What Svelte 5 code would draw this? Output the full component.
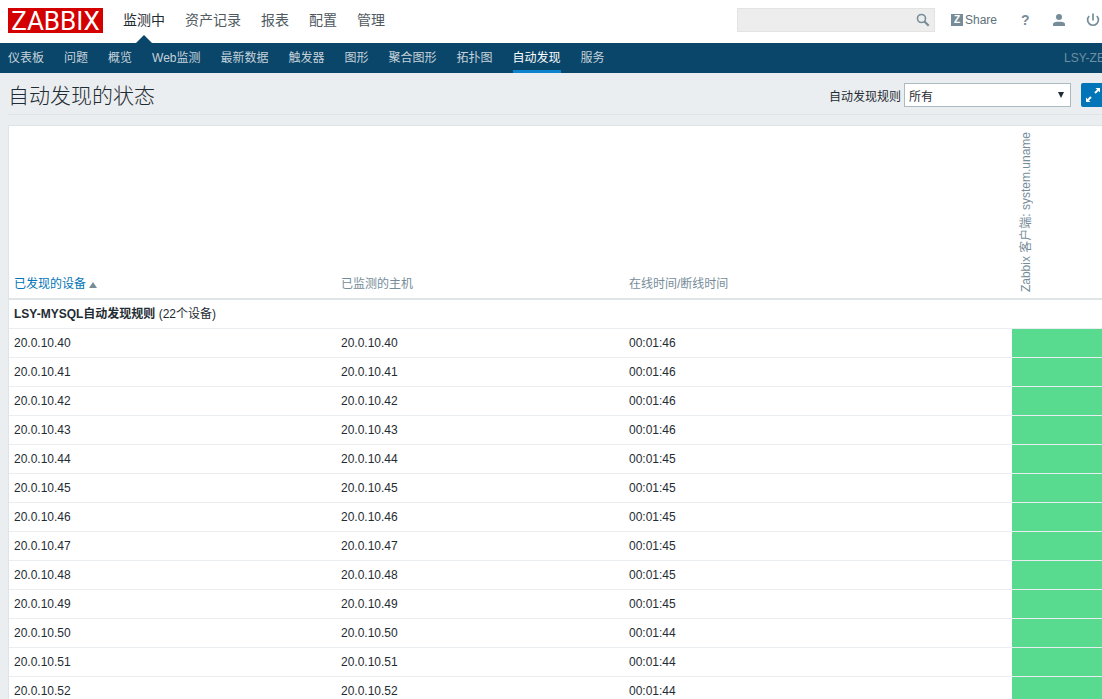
<script lang="ts">
  const mainMenu = ['监测中', '资产记录', '报表', '配置', '管理'];
  const subMenu = ['仪表板', '问题', '概览', 'Web监测', '最新数据', '触发器', '图形', '聚合图形', '拓扑图', '自动发现', '服务'];

  const hosts = [
    { ip: '20.0.10.40', uptime: '00:01:46' },
    { ip: '20.0.10.41', uptime: '00:01:46' },
    { ip: '20.0.10.42', uptime: '00:01:46' },
    { ip: '20.0.10.43', uptime: '00:01:46' },
    { ip: '20.0.10.44', uptime: '00:01:45' },
    { ip: '20.0.10.45', uptime: '00:01:45' },
    { ip: '20.0.10.46', uptime: '00:01:45' },
    { ip: '20.0.10.47', uptime: '00:01:45' },
    { ip: '20.0.10.48', uptime: '00:01:45' },
    { ip: '20.0.10.49', uptime: '00:01:45' },
    { ip: '20.0.10.50', uptime: '00:01:44' },
    { ip: '20.0.10.51', uptime: '00:01:44' },
    { ip: '20.0.10.52', uptime: '00:01:44' },
  ];

  let activeMain = $state('监测中');
  let activeSub = $state('自动发现');
  let search = $state('');
</script>

<div class="page">
  <header class="top">
    <a class="logo" href="#home">ZABBIX</a>
    <nav class="main-nav">
      {#each mainMenu as item}
        <a href="#{item}" class:active={activeMain === item} onclick={() => activeMain = item}>{item}</a>
      {/each}
    </nav>
    <form class="search">
      <input type="text" aria-label="search" bind:value={search} />
      <button type="button" aria-label="search">
        <svg width="14" height="14" viewBox="0 0 14 14" fill="none" stroke="#768d99">
          <circle cx="5.5" cy="5.5" r="4" stroke-width="1.6" />
          <path d="M8.5 8.5 L12.7 12.7" stroke-width="2.2" />
        </svg>
      </button>
    </form>
    <a class="share" href="#share"><span class="z">Z</span>Share</a>
    <a class="help" href="#help">?</a>
    <a class="icon user" href="#profile" aria-label="profile">
      <svg width="14" height="14" viewBox="0 0 14 14" fill="#768d99">
        <circle cx="7" cy="4" r="3" />
        <path d="M1 13 V11.2 C1 9.4 4 8.8 7 8.8 S13 9.4 13 11.2 V13 Z" />
      </svg>
    </a>
    <a class="icon" href="#logout" aria-label="logout">
      <svg width="14" height="14" viewBox="0 0 14 14" fill="none" stroke="#768d99" stroke-width="1.7">
        <path d="M7 0.5 V7.5" />
        <path d="M3.2 3 A5.4 5.4 0 1 0 10.8 3" />
      </svg>
    </a>
  </header>

  <nav class="sub-nav">
    {#each subMenu as item}
      <a href="#{item}" class:active={activeSub === item} onclick={() => activeSub = item}>{item}</a>
    {/each}
    <span class="server">LSY-ZE</span>
  </nav>

  <main>
    <div class="title-bar">
      <h1>自动发现的状态</h1>
      <div class="filter">
        <label for="rule">自动发现规则</label>
        <div class="select">
          <select id="rule">
            <option>所有</option>
          </select>
          <svg width="6" height="6" viewBox="0 0 6 6"><path d="M0 0 H6 L3 6 Z" fill="#1f2c33" /></svg>
        </div>
        <button class="expand" type="button" aria-label="fullscreen">
          <svg width="16" height="16" viewBox="0 0 16 16" fill="#fff" stroke="#fff">
            <path d="M10.5 1 H15 V5.5 Z M1 10.5 V15 H5.5 Z" stroke="none" />
            <path d="M13.4 2.6 L10 6 M2.6 13.4 L6 10" stroke-width="2" />
          </svg>
        </button>
      </div>
    </div>

    <table>
      <colgroup>
        <col class="col-device" />
        <col class="col-host" />
        <col />
        <col class="col-check" />
      </colgroup>
      <thead>
        <tr>
          <th><a href="#sort">已发现的设备<span class="arrow"></span></a></th>
          <th>已监测的主机</th>
          <th>在线时间/断线时间</th>
          <th class="check"><span class="vertical">Zabbix 客户端: system.uname</span></th>
        </tr>
      </thead>
      <tbody>
        <tr>
          <td colspan="4"><b>LSY-MYSQL自动发现规则</b> (22个设备)</td>
        </tr>
        {#each hosts as host}
          <tr>
            <td>{host.ip}</td>
            <td>{host.ip}</td>
            <td>{host.uptime}</td>
            <td class="up"></td>
          </tr>
        {/each}
      </tbody>
    </table>
  </main>
</div>

<style>
  :global(body) {
    margin: 0;
    background: #ebeef0;
  }

  .page {
    height: 100vh;
    overflow: hidden;
    font-family: "Liberation Sans", "Noto Sans CJK SC", sans-serif;
    font-size: 12px;
    color: #1f2c33;
  }

  a { text-decoration: none; color: inherit; }
  svg { display: block; }

  /* top bar */
  .top {
    display: flex;
    align-items: center;
    height: 43px;
    padding: 0 2px 3px 8px;
    box-sizing: border-box;
    background: #fff;
  }

  .logo {
    width: 95px;
    height: 25px;
    line-height: 26px;
    background: #d40000;
    color: #fff;
    font-family: Roboto, sans-serif;
    font-size: 26px;
    text-align: center;
  }

  .main-nav {
    display: flex;
    gap: 20px;
    margin-left: 20px;
    font-size: 14px;
    line-height: 40px;
    color: #4f5a61;
  }
  .main-nav a { position: relative; white-space: nowrap; }
  .main-nav a.active { color: #1f2c33; }
  .main-nav a.active::after {
    content: "";
    position: absolute;
    left: 50%;
    bottom: -3px;
    margin-left: -8px;
    border: 8px solid transparent;
    border-top: 0;
    border-bottom-color: #0a466a;
  }

  .search {
    display: flex;
    align-items: center;
    width: 198px;
    height: 24px;
    margin-left: auto;
    box-sizing: border-box;
    border: 1px solid #e3e3e3;
    background: #ededed;
  }
  .search input {
    flex: 1;
    min-width: 0;
    border: 0;
    background: none;
    outline: none;
  }
  .search button {
    padding: 0 4px;
    border: 0;
    background: none;
  }

  .share {
    display: flex;
    align-items: center;
    gap: 2px;
    margin-left: 16px;
    color: #5f717b;
  }
  .z {
    width: 12px;
    height: 12px;
    line-height: 12px;
    background: #768d99;
    color: #fff;
    font-size: 10px;
    font-weight: bold;
    text-align: center;
  }
  .help {
    width: 8px;
    margin-left: 24px;
    color: #768d99;
    font-size: 14px;
    font-weight: bold;
  }
  .icon { margin-left: 20px; }
  .icon.user { margin-left: 23px; }

  /* second level menu */
  .sub-nav {
    display: flex;
    gap: 20px;
    height: 30px;
    padding-left: 8px;
    background: #0a466a;
    color: #c5d2da;
    line-height: 30px;
    overflow: hidden;
  }
  .sub-nav a {
    height: 27px;
    white-space: nowrap;
  }
  .sub-nav a.active {
    border-bottom: 3px solid #0f84ce;
    color: #fff;
  }
  .server {
    width: 38px;
    margin-left: auto;
    color: #6f8fa2;
    white-space: nowrap;
  }

  main { padding-left: 8px; }

  .title-bar {
    display: flex;
    align-items: center;
    justify-content: space-between;
    height: 41px;
    border-bottom: 1px solid #dfe4e7;
  }
  h1 {
    margin: 0;
    padding-top: 5px;
    font-size: 21px;
    font-weight: 300;
    line-height: 40px;
  }
  .filter {
    display: flex;
    align-items: center;
    padding-top: 3px;
  }
  .select {
    position: relative;
    margin: 0 10px 0 3px;
  }
  select {
    display: block;
    appearance: none;
    width: 167px;
    height: 24px;
    padding: 3px 4px 0;
    border: 1px solid #acbbc2;
    border-radius: 0;
    background: #fff;
    color: inherit;
    font: inherit;
  }
  .select svg {
    position: absolute;
    top: 9px;
    right: 7px;
    pointer-events: none;
  }
  .expand {
    width: 21px;
    height: 24px;
    padding: 0 0 0 4px;
    border: 0;
    border-radius: 2px 0 0 2px;
    background: #0275b8;
    overflow: hidden;
  }

  /* discovery table */
  table {
    width: 100%;
    margin-top: 10px;
    border: 1px solid #dfe4e7;
    border-width: 1px 0 0 1px;
    border-spacing: 0;
    table-layout: fixed;
    background: #fff;
  }
  .col-device { width: 327px; }
  .col-host { width: 288px; }
  .col-check { width: 90px; }

  th {
    height: 174px;
    padding: 0 5px 5px;
    box-sizing: border-box;
    border-bottom: 2px solid #dfe4e7;
    color: #768d99;
    font-weight: normal;
    line-height: 18px;
    text-align: left;
    vertical-align: bottom;
  }
  th.check { padding-bottom: 6px; }
  th a { color: #0275b8; }
  .arrow {
    display: inline-block;
    margin-left: 3px;
    border: 4px solid transparent;
    border-top: 0;
    border-bottom: 6px solid #768d99;
  }
  .vertical {
    display: block;
    writing-mode: vertical-rl;
    text-orientation: sideways;
    transform: rotate(180deg);
    white-space: nowrap;
  }

  td {
    height: 29px;
    padding: 0 5px;
    box-sizing: border-box;
    border-bottom: 1px solid #ebeef0;
    line-height: 18px;
  }
  .up { background: #59db8f; }
</style>
